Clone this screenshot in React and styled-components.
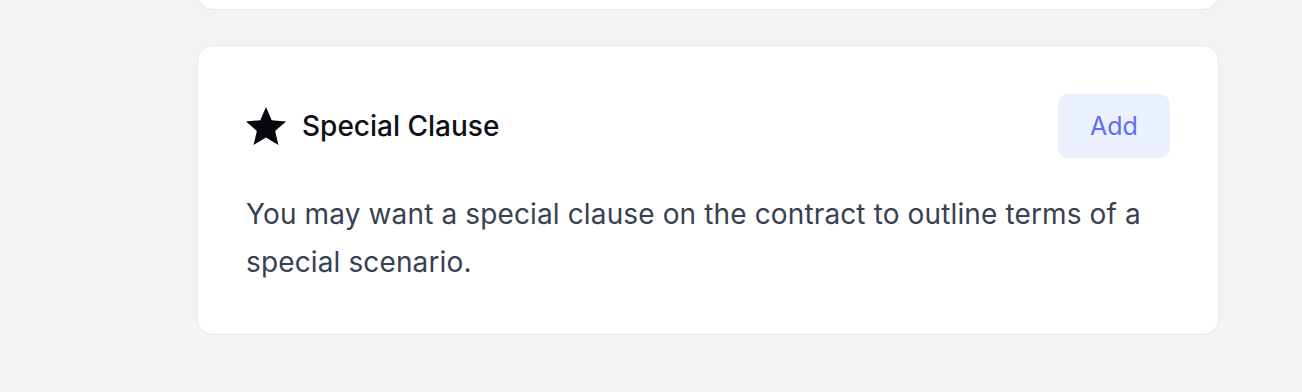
import React from 'react';
import styled, { createGlobalStyle } from 'styled-components';

const GlobalStyle = createGlobalStyle`
  html, body {
    margin: 0;
    padding: 0;
    background: #f3f3f6;
    font-family: Inter, "Noto Sans", "Liberation Sans", sans-serif;
    -webkit-font-smoothing: antialiased;
  }
  * { box-sizing: border-box; }
`;

const Page = styled.div`
  width: 1302px;
  height: 392px;
  overflow: hidden;
  padding-left: 197px;
`;

const Stack = styled.div`
  width: 1022px;
  display: flex;
  flex-direction: column;
  gap: 35px;
`;

const Card = styled.section`
  background: #ffffff;
  border: 1px solid #e5e7ef;
  border-radius: 16px;
  padding: 48px;
`;

const PrevCard = styled(Card)`
  height: 120px;
  margin-top: -110px;
`;

const Header = styled.div`
  display: flex;
  align-items: center;
  justify-content: space-between;
`;

const TitleGroup = styled.div`
  display: flex;
  align-items: center;
  gap: 16px;
`;

const Title = styled.h3`
  margin: 0;
  font-size: 28px;
  font-weight: 500;
  color: #0d1117;
`;

const AddButton = styled.button`
  width: 112px;
  height: 64px;
  border: none;
  border-radius: 10px;
  background: #eaf0fe;
  color: #5d6ff0;
  font-family: inherit;
  font-size: 25px;
  font-weight: 400;
  cursor: pointer;
`;

const Text = styled.p`
  margin: 32px 0 0;
  font-size: 28px;
  line-height: 48px;
  letter-spacing: 0.13px;
  color: #374151;
`;

const StarIcon = () => (
  <svg width="40" height="40" viewBox="2 2 20 20" fill="#05070c">
    <path d="M12 2.5l2.85 6.6 7.15.62-5.43 4.72 1.63 7.06L12 17.77 5.8 21.5l1.63-7.06L2 9.72l7.15-.62z" />
  </svg>
);

export default function App() {
  return (
    <Page>
      <GlobalStyle />
      <Stack>
        <PrevCard />
        <Card>
          <Header>
            <TitleGroup>
              <StarIcon />
              <Title>Special Clause</Title>
            </TitleGroup>
            <AddButton>Add</AddButton>
          </Header>
          <Text>
            You may want a special clause on the contract to outline terms of a special scenario.
          </Text>
        </Card>
      </Stack>
    </Page>
  );
}
